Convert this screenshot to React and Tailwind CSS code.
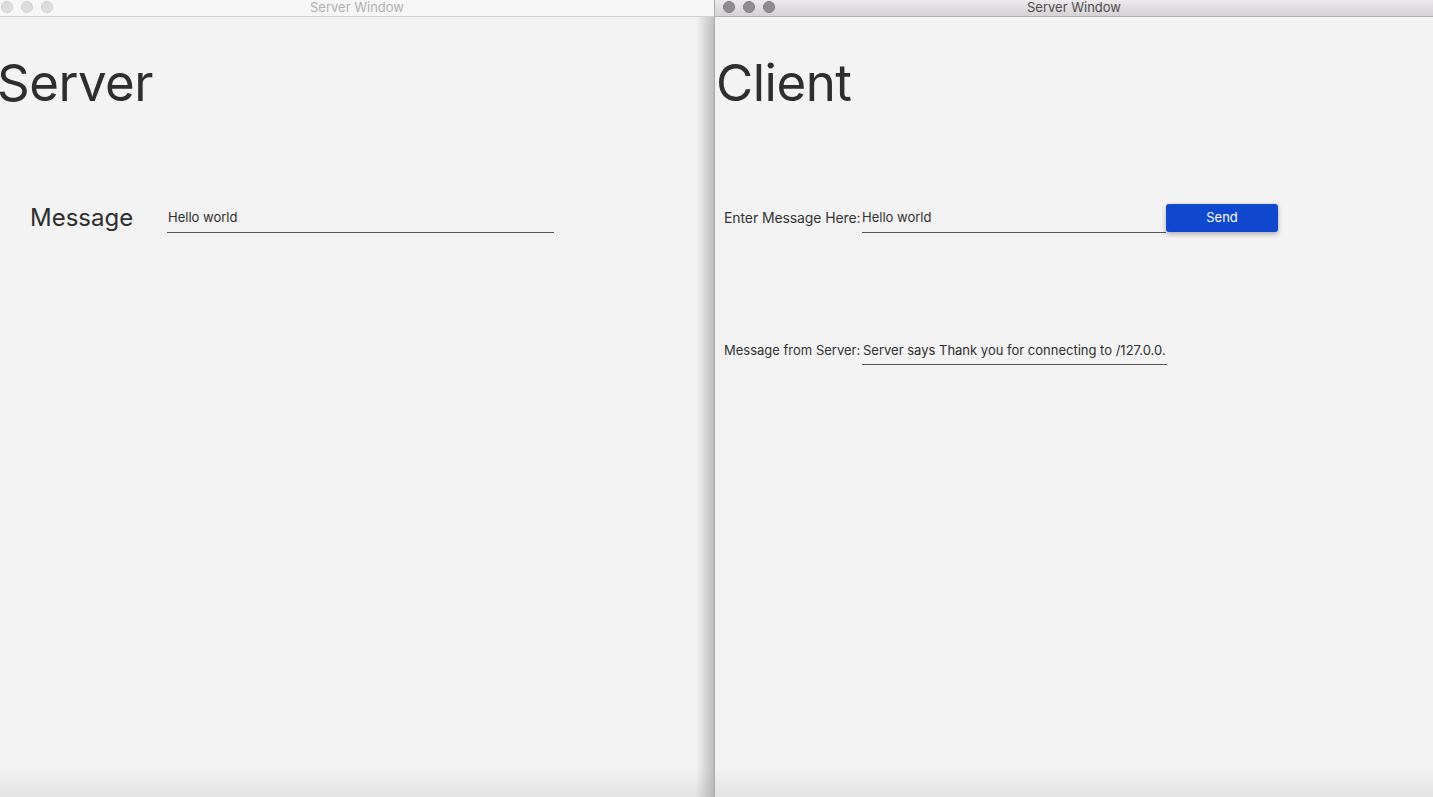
function TrafficLights({ active }) {
  const dot = active
    ? "w-3 h-3 rounded-full bg-[#8d8c90] border border-[#7d7c80]"
    : "w-3 h-3 rounded-full bg-[#dcdcdc] border border-[#d0d0d0]";
  return (
    <div className="flex items-center gap-2">
      <span className={dot} />
      <span className={dot} />
      <span className={dot} />
    </div>
  );
}

function TitleBar({ active }) {
  return (
    <div
      className={`relative h-[17px] flex items-center pb-[2px] border-b ${
        active
          ? "bg-gradient-to-b from-[#ebe9eb] to-[#d4d2d4] border-[#b3b3b3] pl-[8px]"
          : "bg-[#f6f6f6] border-[#d0d0d0] pl-[1px]"
      }`}
    >
      <TrafficLights active={active} />
      <div
        className={`absolute inset-0 flex items-start justify-center text-[13px] leading-[14px] ${
          active ? "text-[#4d4d4d]" : "text-[#b0b0b0]"
        }`}
      >
        Server Window
      </div>
    </div>
  );
}

function BottomShade() {
  return (
    <div className="absolute left-0 right-0 bottom-0 h-[30px] bg-gradient-to-b from-transparent to-[#e2e2e2] pointer-events-none" />
  );
}

export default function App() {
  return (
    <div
      className="flex w-[1433px] h-[797px] overflow-hidden bg-[#f3f3f3] text-[#2e2e2e]"
      style={{ fontFamily: "Inter, 'Liberation Sans', sans-serif" }}
    >
      {/* Server window (inactive, behind) */}
      <div className="relative w-[714px] shrink-0 flex flex-col bg-[#f3f3f3]">
        <TitleBar active={false} />
        <div className="relative flex-1">
          <h1 className="ml-[-3px] mt-[40px] text-[51px] leading-none font-normal tracking-[-0.5px]">
            Server
          </h1>
          <div className="flex items-center mt-[95px]">
            <span className="ml-[30px] w-[137px] text-[24px] leading-none">Message</span>
            <div className="w-[387px] border-b border-[#555] pt-[8px] pb-[8px] pl-[1px] text-[13px] leading-none">
              Hello world
            </div>
          </div>
          <BottomShade />
          <div className="absolute top-0 bottom-0 right-0 w-[18px] bg-gradient-to-r from-transparent to-[#9a9a9a]/60" />
        </div>
      </div>

      {/* Client window (active, front) */}
      <div className="relative flex-1 flex flex-col bg-[#f3f3f3] border-l border-[#a8a8a8]">
        <TitleBar active={true} />
        <div className="relative flex-1">
          <h1 className="ml-[1px] mt-[40px] text-[51px] leading-none font-normal tracking-[-0.5px]">
            Client
          </h1>
          <div className="flex items-center mt-[95px] ml-[9px]">
            <span className="w-[138px] text-[14px] leading-none text-[#333] whitespace-nowrap tracking-[-0.1px]">
              Enter Message Here:
            </span>
            <div className="w-[304px] border-b border-[#555] pt-[8px] pb-[8px] text-[13px] leading-none">
              Hello world
            </div>
            <button className="w-[112px] h-[28px] mb-[1px] rounded-[3px] bg-[#1048d0] text-white text-[13px] shadow-[0_2px_5px_rgba(0,0,0,0.3)]">
              Send
            </button>
          </div>
          <div className="flex items-end mt-[111px] ml-[9px]">
            <span className="w-[138px] pb-[8px] text-[13px] leading-none text-[#333] whitespace-nowrap">
              Message from Server:
            </span>
            <div className="w-[305px] border-b border-[#555] pb-[7px] pl-[1px] text-[13px] leading-none whitespace-nowrap">
              Server says Thank you for connecting to /127.0.0.
            </div>
          </div>
          <BottomShade />
        </div>
      </div>
    </div>
  );
}
